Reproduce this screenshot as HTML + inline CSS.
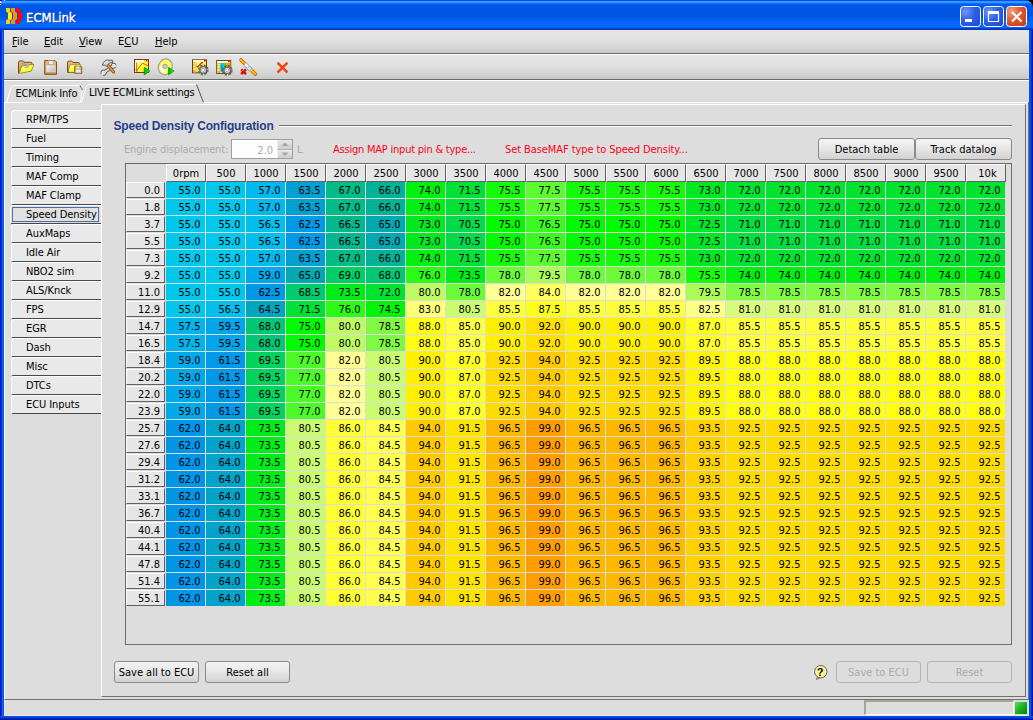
<!DOCTYPE html>
<html lang="en">
<head>
<meta charset="utf-8">
<title>ECMLink</title>
<style>
*{box-sizing:border-box;margin:0;padding:0}
html,body{width:1033px;height:720px;overflow:hidden;background:#0831d9}
body{font-family:"DejaVu Sans Condensed","Liberation Sans",sans-serif;font-size:11px;color:#000;position:relative;line-height:1}
.abs,#win div,#win span.a{position:absolute}
#win{position:absolute;left:0;top:0;width:1033px;height:720px;background:#0551e0;overflow:hidden}
/* title bar */
#title{left:0;top:0;width:1033px;height:30px;border-radius:7px 8px 0 0;background:linear-gradient(180deg,#0050e6 0px,#0050e6 1px,#3c96ff 1.500px,#3a94ff 2.500px,#0470ff 3.500px,#0260f4 4.500px,#0056e4 6px,#0055e2 16px,#015ef0 20px,#0268ff 22px,#0268ff 26px,#0260f2 27.500px,#0048dc 28.500px,#0034c8 29.500px,#0030c4 30px)}
#title .txt{left:26px;top:9.5px;color:#fff;font-family:"DejaVu Sans Condensed","DejaVu Sans","Liberation Sans",sans-serif;font-weight:normal;font-size:13px;line-height:15px;text-shadow:1px 1px 0 #0a2a80;-webkit-text-stroke:0.35px #fff;white-space:nowrap}
.wb{top:6px;width:21px;height:21px;border:1px solid #fff;border-radius:3.5px;background:radial-gradient(circle at 25% 25%,#6c98fa 0%,#2e60e6 45%,#1c48cc 100%)}
.wb.close{background:radial-gradient(circle at 25% 25%,#f0a484 0%,#e0562c 45%,#c23a12 100%)}
/* client */
#client{left:4px;top:30px;width:1025px;height:686px;background:#dddddd}
#menubar{left:4px;top:30px;width:1025px;height:24px;background:linear-gradient(180deg,#e5e5e5 0%,#e2e2e2 40%,#d7d7d7 70%,#c9c9c9 100%);border-top:1px solid #ece9dc;border-bottom:1px solid #6a6a6a}
#menubar span{position:absolute;top:5px;white-space:nowrap}
#menubar u{text-decoration:underline;text-underline-offset:1px}
#toolbar{left:4px;top:54px;width:1025px;height:26px;background:linear-gradient(180deg,#e5e5e5 0%,#e2e2e2 40%,#d7d7d7 70%,#c9c9c9 100%);border-top:1px solid #fff;border-bottom:1px solid #6a6a6a;box-shadow:0 1px 0 #fff}
/* tabs */
.tab{white-space:nowrap;letter-spacing:-0.17px}
/* side tabs */
.st{left:11px;width:90px;height:19px;background:#e9e9e9;border-top:1px solid #fff;border-left:1px solid #fff;border-bottom:1px solid #484848;border-radius:4px 0 0 2px}
.st span{position:absolute;left:14px;top:3px;white-space:nowrap;letter-spacing:-0.08px}
.st.sel{left:10px;width:92px;background:#dddddd}
.st.sel span{left:1px;top:1px;width:87px;height:15px;padding:1px 0 0 13px;border:1px solid #4a6eb0;background:#e1e1e1}
/* main panel */
#panel{left:101px;top:104px;width:925px;height:593px;background:#dddddd;border-top:1px solid #fff;border-left:1px solid #fff;border-right:1px solid #707070;border-bottom:1px solid #707070}
.btn{height:22px;border:1px solid #8a8a8a;border-radius:3px;background:linear-gradient(180deg,#f4f4f4 0%,#e6e6e6 50%,#d2d2d2 100%);text-align:center;line-height:20px;padding-top:1px;white-space:nowrap}
.btn.dis{color:#ababab;background:#dddddd;border-color:#b4b4b4}
/* table */
#tbl{left:125px;top:163px;width:887px;height:482px;border-top:1px solid #686868;border-left:1px solid #686868;border-right:1px solid #707070;border-bottom:1px solid #707070;background:#dddddd}
#tbl .ch:nth-of-type(21){padding-left:3px}
#tbl .ch{top:0;width:40px;height:18px;background:#e6e6e6;border-top:1px solid #fff;border-left:1px solid #fff;border-right:1px solid #606060;border-bottom:1px solid #606060;text-align:center;line-height:16px;padding-top:1px}
#tbl .rh{left:0;width:39px;height:16px;background:#e6e6e6;border-top:1px solid #fff;border-left:1px solid #fff;border-right:1px solid #606060;border-bottom:1px solid #606060;text-align:right;padding-right:4px;line-height:14px;padding-top:1px}
#tbl .row{left:40px;width:840px;height:17px;white-space:nowrap;font-size:0}
#tbl .row i{display:inline-block;width:40px;height:17px;font-style:normal;font-size:11px;line-height:16px;padding-top:1px;vertical-align:top;text-align:right;padding-right:4.5px;border-right:1px solid #dcdcdc;border-bottom:1px solid #dcdcdc}
.hd{font-family:"Liberation Sans",sans-serif;font-weight:bold;font-size:12px;color:#26408a;white-space:nowrap;letter-spacing:-0.17px}
.rule{height:2px;border-top:1px solid #707070;border-bottom:1px solid #fff}
.lbl{white-space:nowrap}
.lbl.dis{letter-spacing:-0.15px}
.dis{color:#ababab}
.red{color:#ff0018}
.spin{width:62px;height:20px;border:1px solid #a0a0a0;background:#fdfdfd;color:#ababab}
#bl{left:0;top:0;width:4px;height:720px;background:linear-gradient(90deg,#0014c8 0,#0014c8 1px,#0030d8 1px,#0030d8 2px,#1266ec 2px,#1266ec 3px,#0655e0 3px)}
#br{left:1029px;top:0;width:4px;height:720px;background:linear-gradient(90deg,#0655e0 0,#0655e0 1px,#0a50e6 1px,#0a50e6 2px,#0030d0 2px,#0030d0 3px,#0014b8 3px)}
#bb{left:0;top:716px;width:1033px;height:4px;background:linear-gradient(180deg,#0650e2 0,#0650e2 1px,#0444d8 1px,#0444d8 2px,#002cc4 2px,#002cc4 3px,#0016a8 3px)}
.px{background:#fff;z-index:5}
#corner{left:1023px;top:0;width:10px;height:10px;background:#000}
#tabpane{left:4px;top:102px;width:1025px;height:598px;border-left:1px solid #fff;border-right:1px solid #707070;border-bottom:1px solid #707070}
#status{left:4px;top:700px;width:1025px;height:16px;background:#dddddd;border-left:1px solid #f0e8d8;border-bottom:1px solid #f0e8d8}
#prog{left:859px;top:0;width:150px;height:15px;border-top:2px solid #a8a498;border-left:2px solid #a8a498;border-bottom:1px solid #fff;border-right:1px solid #fff;background:#dddddd}
#led{left:1010px;top:2px;width:12px;height:12px;background:linear-gradient(135deg,#60e060 0%,#20b020 50%,#008000 100%)}
.sb{left:45px;width:15px;height:9px;border-left:1px solid #f0f0f0;background:linear-gradient(180deg,#e9e9e9,#cdcdcd)}
.tab{white-space:nowrap;letter-spacing:-0.17px}
.v550{background-color:rgb(0,200,236)}
.v565{background-color:rgb(0,190,238)}
.v570{background-color:rgb(0,185,237)}
.v575{background-color:rgb(0,180,236)}
.v590{background-color:rgb(0,169,234)}
.v595{background-color:rgb(0,165,234)}
.v615{background-color:rgb(0,153,232)}
.v620{background-color:rgb(0,150,232)}
.v625{background-color:rgb(0,153,229)}
.v635{background-color:rgb(0,161,210)}
.v640{background-color:rgb(0,163,201)}
.v645{background-color:rgb(0,165,192)}
.v650{background-color:rgb(0,169,178)}
.v660{background-color:rgb(0,178,150)}
.v665{background-color:rgb(0,183,142)}
.v670{background-color:rgb(0,188,134)}
.v680{background-color:rgb(0,198,118)}
.v685{background-color:rgb(0,202,110)}
.v690{background-color:rgb(0,206,102)}
.v695{background-color:rgb(0,211,93)}
.v705{background-color:rgb(0,218,75)}
.v710{background-color:rgb(0,222,65)}
.v715{background-color:rgb(0,225,55)}
.v720{background-color:rgb(0,228,48)}
.v725{background-color:rgb(0,230,40)}
.v730{background-color:rgb(0,233,32)}
.v735{background-color:rgb(0,236,25)}
.v740{background-color:rgb(0,241,17)}
.v745{background-color:rgb(0,245,8)}
.v750{background-color:rgb(0,250,0)}
.v755{background-color:rgb(21,251,11)}
.v760{background-color:rgb(42,252,22)}
.v765{background-color:rgb(58,251,31)}
.v770{background-color:rgb(75,250,40)}
.v775{background-color:rgb(92,250,49)}
.v780{background-color:rgb(108,249,58)}
.v785{background-color:rgb(128,249,68)}
.v795{background-color:rgb(170,250,90)}
.v800{background-color:rgb(190,250,100)}
.v805{background-color:rgb(202,251,112)}
.v810{background-color:rgb(215,252,125)}
.v820{background-color:rgb(255,255,150)}
.v825{background-color:rgb(255,255,135)}
.v830{background-color:rgb(255,255,120)}
.v840{background-color:rgb(255,255,95)}
.v845{background-color:rgb(255,255,82)}
.v850{background-color:rgb(255,255,70)}
.v855{background-color:rgb(255,255,62)}
.v860{background-color:rgb(255,255,53)}
.v870{background-color:rgb(255,255,37)}
.v875{background-color:rgb(255,255,28)}
.v880{background-color:rgb(255,255,20)}
.v895{background-color:rgb(255,244,5)}
.v900{background-color:rgb(255,240,0)}
.v915{background-color:rgb(255,228,0)}
.v920{background-color:rgb(255,224,0)}
.v925{background-color:rgb(255,220,0)}
.v935{background-color:rgb(255,209,0)}
.v940{background-color:rgb(255,203,0)}
.v965{background-color:rgb(255,184,0)}
.v990{background-color:rgb(255,158,0)}
</style>
</head>
<body>
<div id="win">
 <div id="bl"></div><div id="br"></div><div id="bb"></div>
 <div id="corner"></div>
 <div class="px" style="left:4px;top:0;width:1px;height:1px"></div><div class="px" style="left:0;top:1px;width:2px;height:2px;border-radius:0 2px 0 0"></div><div class="px" style="left:0;top:4px;width:1px;height:1px"></div>
 <div id="title">
  <svg style="position:absolute;left:6px;top:8px" width="17" height="16" viewBox="0 0 17 16">
   <path d="M0 0h4v3.500l2 1.500v6l-2 1.500v3.500h-4v-3.500l2-1.500v-6l-2-1.500z" fill="#ffd000"/>
   <path d="M2.200 5h3v6h-3z" fill="#fff000"/>
   <path d="M5 0h4v3.500l2 1.500v6l-2 1.500v3.500h-4v-3.500l2-1.500v-6l-2-1.500z" fill="#ff8c10"/>
   <path d="M10 0h4v3.500l2 1.500v6l-2 1.500v3.500h-4v-3.500l2-1.500v-6l-2-1.500z" fill="#f40a0a"/>
  </svg>
  <div class="txt">ECMLink</div>
  <div class="wb" style="left:960px"><svg width="19" height="19"><rect x="4" y="12" width="7" height="3" fill="#fff"/></svg></div>
  <div class="wb" style="left:983px"><svg width="19" height="19"><path d="M4.500 5.500h10v9h-10z" fill="none" stroke="#fff" stroke-width="1.200"/><rect x="4" y="4" width="11" height="3" fill="#fff"/></svg></div>
  <div class="wb close" style="left:1006px"><svg width="19" height="19"><path d="M5 5l9.500 9.500M14.500 5l-9.500 9.500" stroke="#fff" stroke-width="2.200" stroke-linecap="butt"/></svg></div>
 </div>
 <div id="client"></div>
 <div id="menubar">
  <span style="left:8px"><u>F</u>ile</span>
  <span style="left:40px"><u>E</u>dit</span>
  <span style="left:75px"><u>V</u>iew</span>
  <span style="left:114px">E<u>C</u>U</span>
  <span style="left:151px"><u>H</u>elp</span>
 </div>
 <div id="toolbar">
  <svg style="position:absolute;left:-4px;top:-1px" width="304" height="26" viewBox="0 54 304 26">
   <defs>
    <linearGradient id="gy" x1="0" y1="0" x2="1" y2="1"><stop offset="0" stop-color="#ffffc0"/><stop offset="0.500" stop-color="#ffff40"/><stop offset="1" stop-color="#e4e400"/></linearGradient>
    <linearGradient id="gt" x1="0" y1="0" x2="0" y2="1"><stop offset="0" stop-color="#e8c088"/><stop offset="1" stop-color="#c89040"/></linearGradient>
    <linearGradient id="gg" x1="0" y1="0" x2="1" y2="0"><stop offset="0" stop-color="#00a800"/><stop offset="0.600" stop-color="#10e010"/><stop offset="1" stop-color="#40f040"/></linearGradient>
    <linearGradient id="gs" x1="0" y1="0" x2="1" y2="1"><stop offset="0" stop-color="#f4f4f4"/><stop offset="1" stop-color="#b8b8b8"/></linearGradient>
   </defs>
   <!-- 1 open folder -->
   <g>
    <path d="M18.500 73.500V62.300Q18.500 61 20 61H23Q24 61 24.300 62.300H31Q32 62.300 32 63.500V66" fill="url(#gt)" stroke="#7a4a10" stroke-width="1"/>
    <path d="M21.700 66L34 64.300L31.200 71.200L19.300 73.400z" fill="url(#gy)" stroke="#80701a" stroke-width="0.700"/>
    <path d="M21 64Q24 62.500 26.300 65.500" fill="none" stroke="#a0a0a8" stroke-width="1.500"/>
    <path d="M24.800 67.300L28.300 67.800L27.600 63.800z" fill="#c8c8d0" stroke="#909098" stroke-width="0.500"/>
   </g>
   <!-- 2 floppy -->
   <g>
    <path d="M44.700 60.500H55L56.500 62V74.300H44.700z" fill="url(#gt)" stroke="#80500c" stroke-width="1"/>
    <rect x="48.300" y="60.600" width="5.500" height="4" fill="#e4e4e4" stroke="#b09060" stroke-width="0.500"/>
    <rect x="50.500" y="61" width="1.500" height="3" fill="#f8f8f8"/>
    <rect x="46.200" y="65.700" width="9" height="6.200" fill="url(#gs)" stroke="#d8e0f0" stroke-width="0.600"/>
   </g>
   <!-- 3 folder + floppy -->
   <g>
    <path d="M67.500 72.500V62.300Q67.500 61.200 69 61.200H71.500Q72.500 61.200 72.800 62.500H78.500Q79.500 62.500 79.500 63.700V72.500z" fill="url(#gt)" stroke="#7a4a10" stroke-width="1"/>
    <path d="M69.800 64.800L80.500 64.300L79 72.300L68.200 72.300z" fill="url(#gy)" stroke="#80701a" stroke-width="0.600"/>
    <path d="M74.700 66.200H81L81.800 67V73.300H74.700z" fill="#d8a868" stroke="#80500c" stroke-width="0.800"/>
    <rect x="76.300" y="66.400" width="3.200" height="2.300" fill="#dce4f4"/>
    <rect x="75.800" y="69.800" width="4.800" height="2.800" fill="#e8e8e8"/>
   </g>
   <!-- 4 tools -->
   <g>
    <path d="M104 72.500L113.300 66" stroke="#505050" stroke-width="3.800" stroke-linecap="butt"/>
    <circle cx="103.600" cy="72.700" r="2.700" fill="#e8e8e8" stroke="#505050" stroke-width="1"/>
    <circle cx="113.700" cy="65.700" r="2.500" fill="#e8e8e8" stroke="#505050" stroke-width="1"/>
    <path d="M104 72.500L113.300 66" stroke="#e4e4e4" stroke-width="2" stroke-linecap="butt"/>
    <path d="M100.500 74L103.800 72.800L102.600 76.500z" fill="#dbdbdb"/>
    <path d="M116.800 64L113.600 65.700L116.300 67.800z" fill="#dbdbdb"/>
    <path d="M107.500 64.800L113.600 72" stroke="#7a4a08" stroke-width="3" stroke-linecap="round"/>
    <path d="M107.500 64.800L113.600 72" stroke="#f0a030" stroke-width="1.500" stroke-linecap="round"/>
    <path d="M102.300 65.300Q102.800 62 106.200 60.200L112.500 60.200L113 62.300L109 63.200L106.500 66.300Q104.500 64.500 102.300 65.300z" fill="#d4d4d4" stroke="#505050" stroke-width="0.900"/>
    <path d="M104 63.500Q105.500 61.500 108 61.200" stroke="#fafafa" stroke-width="0.800" fill="none"/>
   </g>
   <!-- 5 graph + play -->
   <g>
    <rect x="134.500" y="59.500" width="14" height="13" fill="url(#gy)" stroke="#7a3c00" stroke-width="1"/>
    <rect x="135" y="60" width="13" height="1.700" fill="#fff"/>
    <rect x="144" y="60" width="1.300" height="1.500" fill="#ffa000"/><rect x="146" y="60" width="1.500" height="1.500" fill="#f01010"/>
    <rect x="135" y="62" width="1.200" height="10" fill="#fff"/>
    <path d="M136.700 62.500V72M135 69.800H138" stroke="#b86010" stroke-width="0.900" fill="none"/>
    <path d="M136.700 70.500L142.500 63.200L148 65.700" stroke="#c86a10" stroke-width="1" fill="none"/>
    <path d="M144.200 67.200V75L150 71z" fill="url(#gg)" stroke="#008800" stroke-width="0.600"/>
   </g>
   <!-- 6 cd + play -->
   <g>
    <ellipse cx="165.300" cy="66.800" rx="6.800" ry="8" transform="rotate(20 165.300 66.800)" fill="#ffff58" stroke="#a0a0a8" stroke-width="1.300"/>
    <ellipse cx="163.600" cy="68" rx="3.200" ry="5" transform="rotate(20 163.600 68)" fill="#fffff0" opacity="0.750"/>
    <circle cx="165" cy="66.300" r="2.200" fill="#d0d0d8" stroke="#8c8c98" stroke-width="0.900"/>
    <path d="M168.400 67.200V75L174.200 71z" fill="url(#gg)" stroke="#008800" stroke-width="0.600"/>
   </g>
   <!-- 7 graph + gear -->
   <g>
    <rect x="192.500" y="59.800" width="14" height="13" fill="url(#gy)" stroke="#7a3c00" stroke-width="1"/>
    <rect x="193" y="60.300" width="13" height="1.600" fill="#fff"/>
    <rect x="202.300" y="60.200" width="1.300" height="1.400" fill="#fff"/><rect x="204" y="60" width="1.800" height="1.600" fill="#f01010"/>
    <rect x="193" y="62.200" width="3.400" height="10.200" fill="#d8b070"/>
    <rect x="193.400" y="63" width="2.200" height="1.600" fill="#ffff60"/><rect x="193.400" y="65.600" width="2.200" height="1.600" fill="#ffff60"/><rect x="193.400" y="68.200" width="2.200" height="2" fill="#ffff60"/>
    <path d="M196.500 66.600H198L201.800 62.600H203" stroke="#f01010" stroke-width="1.100" fill="none"/>
    <circle cx="203.200" cy="69.900" r="4.200" fill="none" stroke="#686868" stroke-width="2.600" stroke-dasharray="2 1.300"/>
    <circle cx="203.200" cy="69.900" r="3.200" fill="#e4e4e4" stroke="#686868" stroke-width="1.200"/>
    <circle cx="203.200" cy="69.900" r="1.500" fill="#fff" stroke="#808080" stroke-width="0.600"/>
   </g>
   <!-- 8 map + gear -->
   <g>
    <rect x="216.700" y="60.500" width="14" height="13" fill="url(#gy)" stroke="#7a3c00" stroke-width="1"/>
    <rect x="217.200" y="61" width="13" height="1.600" fill="#fff"/>
    <rect x="226.300" y="60.900" width="1.300" height="1.400" fill="#fff"/><rect x="228" y="60.700" width="1.800" height="1.600" fill="#f01010"/>
    <rect x="217.200" y="62.900" width="3" height="10.200" fill="#d8b070"/>
    <rect x="217.600" y="63.700" width="2" height="1.600" fill="#ffff60"/><rect x="217.600" y="66.300" width="2" height="1.600" fill="#ffff60"/><rect x="217.600" y="68.900" width="2" height="2" fill="#ffff60"/>
    <path d="M220.300 63V71.500H224V63z" fill="#00c8f0"/>
    <path d="M221.500 63L223.300 71.500H221.200z" fill="#0080f0"/>
    <path d="M223.300 63H226V69H224z" fill="#30e030"/>
    <path d="M226 63H230.400V67H226z" fill="#ffa000"/>
    <circle cx="227.200" cy="70.300" r="4.200" fill="none" stroke="#686868" stroke-width="2.600" stroke-dasharray="2 1.300"/>
    <circle cx="227.200" cy="70.300" r="3.200" fill="#e4e4e4" stroke="#686868" stroke-width="1.200"/>
    <circle cx="227.200" cy="70.300" r="1.500" fill="#fff" stroke="#808080" stroke-width="0.600"/>
   </g>
   <!-- 9 disconnect -->
   <g>
    <path d="M241 60L244.500 63.500" stroke="#c86000" stroke-width="3.600" stroke-linecap="round"/>
    <path d="M241 60L244.500 63.500" stroke="#ffa000" stroke-width="2.400" stroke-linecap="round"/>
    <path d="M240.600 59.800L243 62.200" stroke="#ffe800" stroke-width="1" stroke-linecap="round"/>
    <path d="M251.800 70.500L255.300 74" stroke="#c86000" stroke-width="3.600" stroke-linecap="round"/>
    <path d="M251.800 70.500L255.300 74" stroke="#ffa000" stroke-width="2.400" stroke-linecap="round"/>
    <path d="M252.600 71.300L255 73.700" stroke="#ffe800" stroke-width="1" stroke-linecap="round"/>
    <path d="M245 64L248 67" stroke="#8090a0" stroke-width="4" />
    <path d="M245 64L248 67" stroke="#f4f8fc" stroke-width="2.600" />
    <path d="M248.500 67.500L251.800 70.800" stroke="#707070" stroke-width="4.400" stroke-dasharray="1 0.800"/>
    <path d="M248.500 67.500L251.800 70.800" stroke="#f8f8f8" stroke-width="2.800" stroke-dasharray="1 0.800"/>
    <path d="M241.200 69.300L246 74.200M246 69.300L241.200 74.200" stroke="#e80000" stroke-width="2.400"/>
    <path d="M242 69.800L243.600 71.400" stroke="#ffd000" stroke-width="0.900"/>
   </g>
   <!-- 10 red X -->
   <g>
    <path d="M277.600 62.800L287.400 72.500M287.400 62.800L277.600 72.500" stroke="#b83000" stroke-width="2.600" opacity="0.600"/>
    <path d="M277.600 62.600L287.400 72.300M287.400 62.600L277.600 72.300" stroke="#ff3c00" stroke-width="1.800"/>
   </g>
  </svg>

 </div>
 <div id="tabpane"></div>
 <svg id="tabs" style="position:absolute;left:0;top:80px" width="1033" height="26" viewBox="0 80 1033 26">
  <path d="M82 86L80.500 102.500H4.500" fill="none" stroke="#fff" stroke-width="1"/>
  <path d="M6.500 102.500L11 88Q11.800 85.500 14.500 85.500H80" fill="none" stroke="#fff" stroke-width="1"/>
  <path d="M80 85.500L82.500 90" fill="none" stroke="#606060" stroke-width="1"/>
  <path d="M81.500 102.500L86 87Q86.800 84.500 89.500 84.500H196.500" fill="#dddddd" stroke="#fff" stroke-width="1"/>
  <path d="M196.500 84.500L203.500 102.500" fill="none" stroke="#505050" stroke-width="1"/>
  <path d="M203.500 102.500H1028" fill="none" stroke="#fff" stroke-width="1"/>
 </svg>
 <div class="tab" style="left:15.500px;top:88px">ECMLink Info</div>
 <div class="tab" style="left:89px;top:87px">LIVE ECMLink settings</div>
<div class="st" style="top:110px"><span>RPM/TPS</span></div>
<div class="st" style="top:129px"><span>Fuel</span></div>
<div class="st" style="top:148px"><span>Timing</span></div>
<div class="st" style="top:167px"><span>MAF Comp</span></div>
<div class="st" style="top:186px"><span>MAF Clamp</span></div>
<div class="st sel" style="top:205px"><span>Speed Density</span></div>
<div class="st" style="top:224px"><span>AuxMaps</span></div>
<div class="st" style="top:243px"><span>Idle Air</span></div>
<div class="st" style="top:262px"><span>NBO2 sim</span></div>
<div class="st" style="top:281px"><span>ALS/Knck</span></div>
<div class="st" style="top:300px"><span>FPS</span></div>
<div class="st" style="top:319px"><span>EGR</span></div>
<div class="st" style="top:338px"><span>Dash</span></div>
<div class="st" style="top:357px"><span>Misc</span></div>
<div class="st" style="top:376px"><span>DTCs</span></div>
<div class="st" style="top:395px"><span>ECU Inputs</span></div>

 <div id="panel"></div>
 <div class="hd" style="left:113.5px;top:120px">Speed Density Configuration</div>
 <div class="rule" style="left:279px;top:125px;width:733px"></div>
 <div class="lbl dis" style="left:124px;top:144px">Engine displacement:</div>
 <div class="spin" style="left:231px;top:139px"><span class="a" style="right:19px;top:5px">2.0</span>
  <div class="sb" style="top:0"><svg width="14" height="9"><path d="M3.500 6L7 2.500L10.500 6z" fill="#a4a4a4"/></svg></div>
  <div class="sb" style="top:9px;border-top:1px solid #b4b4b4"><svg width="14" height="9"><path d="M3.500 2.500L7 6L10.500 2.500z" fill="#a4a4a4"/></svg></div>
 </div>
 <div class="lbl dis" style="left:297px;top:144px">L</div>
 <div class="lbl red" style="left:333px;top:144px;letter-spacing:-0.22px">Assign MAP input pin &amp; type...</div>
 <div class="lbl red" style="left:505px;top:144px;letter-spacing:-0.08px">Set BaseMAF type to Speed Density...</div>
 <div class="btn" style="left:818px;top:138px;width:97px">Detach table</div>
 <div class="btn" style="left:915px;top:138px;width:97px">Track datalog</div>
 <div id="tbl">
<div class="ch" style="left:40px">0rpm</div>
<div class="ch" style="left:80px">500</div>
<div class="ch" style="left:120px">1000</div>
<div class="ch" style="left:160px">1500</div>
<div class="ch" style="left:200px">2000</div>
<div class="ch" style="left:240px">2500</div>
<div class="ch" style="left:280px">3000</div>
<div class="ch" style="left:320px">3500</div>
<div class="ch" style="left:360px">4000</div>
<div class="ch" style="left:400px">4500</div>
<div class="ch" style="left:440px">5000</div>
<div class="ch" style="left:480px">5500</div>
<div class="ch" style="left:520px">6000</div>
<div class="ch" style="left:560px">6500</div>
<div class="ch" style="left:600px">7000</div>
<div class="ch" style="left:640px">7500</div>
<div class="ch" style="left:680px">8000</div>
<div class="ch" style="left:720px">8500</div>
<div class="ch" style="left:760px">9000</div>
<div class="ch" style="left:800px">9500</div>
<div class="ch" style="left:840px">10k</div>
<div class="rh" style="top:18px">0.0</div>
<div class="row" style="top:18px"><i class="v550">55.0</i><i class="v550">55.0</i><i class="v570">57.0</i><i class="v635">63.5</i><i class="v670">67.0</i><i class="v660">66.0</i><i class="v740">74.0</i><i class="v715">71.5</i><i class="v755">75.5</i><i class="v775">77.5</i><i class="v755">75.5</i><i class="v755">75.5</i><i class="v755">75.5</i><i class="v730">73.0</i><i class="v720">72.0</i><i class="v720">72.0</i><i class="v720">72.0</i><i class="v720">72.0</i><i class="v720">72.0</i><i class="v720">72.0</i><i class="v720">72.0</i></div>
<div class="rh" style="top:35px">1.8</div>
<div class="row" style="top:35px"><i class="v550">55.0</i><i class="v550">55.0</i><i class="v570">57.0</i><i class="v635">63.5</i><i class="v670">67.0</i><i class="v660">66.0</i><i class="v740">74.0</i><i class="v715">71.5</i><i class="v755">75.5</i><i class="v775">77.5</i><i class="v755">75.5</i><i class="v755">75.5</i><i class="v755">75.5</i><i class="v730">73.0</i><i class="v720">72.0</i><i class="v720">72.0</i><i class="v720">72.0</i><i class="v720">72.0</i><i class="v720">72.0</i><i class="v720">72.0</i><i class="v720">72.0</i></div>
<div class="rh" style="top:52px">3.7</div>
<div class="row" style="top:52px"><i class="v550">55.0</i><i class="v550">55.0</i><i class="v565">56.5</i><i class="v625">62.5</i><i class="v665">66.5</i><i class="v650">65.0</i><i class="v730">73.0</i><i class="v705">70.5</i><i class="v750">75.0</i><i class="v765">76.5</i><i class="v750">75.0</i><i class="v750">75.0</i><i class="v750">75.0</i><i class="v725">72.5</i><i class="v710">71.0</i><i class="v710">71.0</i><i class="v710">71.0</i><i class="v710">71.0</i><i class="v710">71.0</i><i class="v710">71.0</i><i class="v710">71.0</i></div>
<div class="rh" style="top:69px">5.5</div>
<div class="row" style="top:69px"><i class="v550">55.0</i><i class="v550">55.0</i><i class="v565">56.5</i><i class="v625">62.5</i><i class="v665">66.5</i><i class="v650">65.0</i><i class="v730">73.0</i><i class="v705">70.5</i><i class="v750">75.0</i><i class="v765">76.5</i><i class="v750">75.0</i><i class="v750">75.0</i><i class="v750">75.0</i><i class="v725">72.5</i><i class="v710">71.0</i><i class="v710">71.0</i><i class="v710">71.0</i><i class="v710">71.0</i><i class="v710">71.0</i><i class="v710">71.0</i><i class="v710">71.0</i></div>
<div class="rh" style="top:86px">7.3</div>
<div class="row" style="top:86px"><i class="v550">55.0</i><i class="v550">55.0</i><i class="v570">57.0</i><i class="v635">63.5</i><i class="v670">67.0</i><i class="v660">66.0</i><i class="v740">74.0</i><i class="v715">71.5</i><i class="v755">75.5</i><i class="v775">77.5</i><i class="v755">75.5</i><i class="v755">75.5</i><i class="v755">75.5</i><i class="v730">73.0</i><i class="v720">72.0</i><i class="v720">72.0</i><i class="v720">72.0</i><i class="v720">72.0</i><i class="v720">72.0</i><i class="v720">72.0</i><i class="v720">72.0</i></div>
<div class="rh" style="top:103px">9.2</div>
<div class="row" style="top:103px"><i class="v550">55.0</i><i class="v550">55.0</i><i class="v590">59.0</i><i class="v650">65.0</i><i class="v690">69.0</i><i class="v680">68.0</i><i class="v760">76.0</i><i class="v735">73.5</i><i class="v780">78.0</i><i class="v795">79.5</i><i class="v780">78.0</i><i class="v780">78.0</i><i class="v780">78.0</i><i class="v755">75.5</i><i class="v740">74.0</i><i class="v740">74.0</i><i class="v740">74.0</i><i class="v740">74.0</i><i class="v740">74.0</i><i class="v740">74.0</i><i class="v740">74.0</i></div>
<div class="rh" style="top:120px">11.0</div>
<div class="row" style="top:120px"><i class="v550">55.0</i><i class="v550">55.0</i><i class="v625">62.5</i><i class="v685">68.5</i><i class="v735">73.5</i><i class="v720">72.0</i><i class="v800">80.0</i><i class="v780">78.0</i><i class="v820">82.0</i><i class="v840">84.0</i><i class="v820">82.0</i><i class="v820">82.0</i><i class="v820">82.0</i><i class="v795">79.5</i><i class="v785">78.5</i><i class="v785">78.5</i><i class="v785">78.5</i><i class="v785">78.5</i><i class="v785">78.5</i><i class="v785">78.5</i><i class="v785">78.5</i></div>
<div class="rh" style="top:137px">12.9</div>
<div class="row" style="top:137px"><i class="v550">55.0</i><i class="v565">56.5</i><i class="v645">64.5</i><i class="v715">71.5</i><i class="v760">76.0</i><i class="v745">74.5</i><i class="v830">83.0</i><i class="v805">80.5</i><i class="v855">85.5</i><i class="v875">87.5</i><i class="v855">85.5</i><i class="v855">85.5</i><i class="v855">85.5</i><i class="v825">82.5</i><i class="v810">81.0</i><i class="v810">81.0</i><i class="v810">81.0</i><i class="v810">81.0</i><i class="v810">81.0</i><i class="v810">81.0</i><i class="v810">81.0</i></div>
<div class="rh" style="top:154px">14.7</div>
<div class="row" style="top:154px"><i class="v575">57.5</i><i class="v595">59.5</i><i class="v680">68.0</i><i class="v750">75.0</i><i class="v800">80.0</i><i class="v785">78.5</i><i class="v880">88.0</i><i class="v850">85.0</i><i class="v900">90.0</i><i class="v920">92.0</i><i class="v900">90.0</i><i class="v900">90.0</i><i class="v900">90.0</i><i class="v870">87.0</i><i class="v855">85.5</i><i class="v855">85.5</i><i class="v855">85.5</i><i class="v855">85.5</i><i class="v855">85.5</i><i class="v855">85.5</i><i class="v855">85.5</i></div>
<div class="rh" style="top:171px">16.5</div>
<div class="row" style="top:171px"><i class="v575">57.5</i><i class="v595">59.5</i><i class="v680">68.0</i><i class="v750">75.0</i><i class="v800">80.0</i><i class="v785">78.5</i><i class="v880">88.0</i><i class="v850">85.0</i><i class="v900">90.0</i><i class="v920">92.0</i><i class="v900">90.0</i><i class="v900">90.0</i><i class="v900">90.0</i><i class="v870">87.0</i><i class="v855">85.5</i><i class="v855">85.5</i><i class="v855">85.5</i><i class="v855">85.5</i><i class="v855">85.5</i><i class="v855">85.5</i><i class="v855">85.5</i></div>
<div class="rh" style="top:188px">18.4</div>
<div class="row" style="top:188px"><i class="v590">59.0</i><i class="v615">61.5</i><i class="v695">69.5</i><i class="v770">77.0</i><i class="v820">82.0</i><i class="v805">80.5</i><i class="v900">90.0</i><i class="v870">87.0</i><i class="v925">92.5</i><i class="v940">94.0</i><i class="v925">92.5</i><i class="v925">92.5</i><i class="v925">92.5</i><i class="v895">89.5</i><i class="v880">88.0</i><i class="v880">88.0</i><i class="v880">88.0</i><i class="v880">88.0</i><i class="v880">88.0</i><i class="v880">88.0</i><i class="v880">88.0</i></div>
<div class="rh" style="top:205px">20.2</div>
<div class="row" style="top:205px"><i class="v590">59.0</i><i class="v615">61.5</i><i class="v695">69.5</i><i class="v770">77.0</i><i class="v820">82.0</i><i class="v805">80.5</i><i class="v900">90.0</i><i class="v870">87.0</i><i class="v925">92.5</i><i class="v940">94.0</i><i class="v925">92.5</i><i class="v925">92.5</i><i class="v925">92.5</i><i class="v895">89.5</i><i class="v880">88.0</i><i class="v880">88.0</i><i class="v880">88.0</i><i class="v880">88.0</i><i class="v880">88.0</i><i class="v880">88.0</i><i class="v880">88.0</i></div>
<div class="rh" style="top:222px">22.0</div>
<div class="row" style="top:222px"><i class="v590">59.0</i><i class="v615">61.5</i><i class="v695">69.5</i><i class="v770">77.0</i><i class="v820">82.0</i><i class="v805">80.5</i><i class="v900">90.0</i><i class="v870">87.0</i><i class="v925">92.5</i><i class="v940">94.0</i><i class="v925">92.5</i><i class="v925">92.5</i><i class="v925">92.5</i><i class="v895">89.5</i><i class="v880">88.0</i><i class="v880">88.0</i><i class="v880">88.0</i><i class="v880">88.0</i><i class="v880">88.0</i><i class="v880">88.0</i><i class="v880">88.0</i></div>
<div class="rh" style="top:239px">23.9</div>
<div class="row" style="top:239px"><i class="v590">59.0</i><i class="v615">61.5</i><i class="v695">69.5</i><i class="v770">77.0</i><i class="v820">82.0</i><i class="v805">80.5</i><i class="v900">90.0</i><i class="v870">87.0</i><i class="v925">92.5</i><i class="v940">94.0</i><i class="v925">92.5</i><i class="v925">92.5</i><i class="v925">92.5</i><i class="v895">89.5</i><i class="v880">88.0</i><i class="v880">88.0</i><i class="v880">88.0</i><i class="v880">88.0</i><i class="v880">88.0</i><i class="v880">88.0</i><i class="v880">88.0</i></div>
<div class="rh" style="top:256px">25.7</div>
<div class="row" style="top:256px"><i class="v620">62.0</i><i class="v640">64.0</i><i class="v735">73.5</i><i class="v805">80.5</i><i class="v860">86.0</i><i class="v845">84.5</i><i class="v940">94.0</i><i class="v915">91.5</i><i class="v965">96.5</i><i class="v990">99.0</i><i class="v965">96.5</i><i class="v965">96.5</i><i class="v965">96.5</i><i class="v935">93.5</i><i class="v925">92.5</i><i class="v925">92.5</i><i class="v925">92.5</i><i class="v925">92.5</i><i class="v925">92.5</i><i class="v925">92.5</i><i class="v925">92.5</i></div>
<div class="rh" style="top:273px">27.6</div>
<div class="row" style="top:273px"><i class="v620">62.0</i><i class="v640">64.0</i><i class="v735">73.5</i><i class="v805">80.5</i><i class="v860">86.0</i><i class="v845">84.5</i><i class="v940">94.0</i><i class="v915">91.5</i><i class="v965">96.5</i><i class="v990">99.0</i><i class="v965">96.5</i><i class="v965">96.5</i><i class="v965">96.5</i><i class="v935">93.5</i><i class="v925">92.5</i><i class="v925">92.5</i><i class="v925">92.5</i><i class="v925">92.5</i><i class="v925">92.5</i><i class="v925">92.5</i><i class="v925">92.5</i></div>
<div class="rh" style="top:290px">29.4</div>
<div class="row" style="top:290px"><i class="v620">62.0</i><i class="v640">64.0</i><i class="v735">73.5</i><i class="v805">80.5</i><i class="v860">86.0</i><i class="v845">84.5</i><i class="v940">94.0</i><i class="v915">91.5</i><i class="v965">96.5</i><i class="v990">99.0</i><i class="v965">96.5</i><i class="v965">96.5</i><i class="v965">96.5</i><i class="v935">93.5</i><i class="v925">92.5</i><i class="v925">92.5</i><i class="v925">92.5</i><i class="v925">92.5</i><i class="v925">92.5</i><i class="v925">92.5</i><i class="v925">92.5</i></div>
<div class="rh" style="top:307px">31.2</div>
<div class="row" style="top:307px"><i class="v620">62.0</i><i class="v640">64.0</i><i class="v735">73.5</i><i class="v805">80.5</i><i class="v860">86.0</i><i class="v845">84.5</i><i class="v940">94.0</i><i class="v915">91.5</i><i class="v965">96.5</i><i class="v990">99.0</i><i class="v965">96.5</i><i class="v965">96.5</i><i class="v965">96.5</i><i class="v935">93.5</i><i class="v925">92.5</i><i class="v925">92.5</i><i class="v925">92.5</i><i class="v925">92.5</i><i class="v925">92.5</i><i class="v925">92.5</i><i class="v925">92.5</i></div>
<div class="rh" style="top:324px">33.1</div>
<div class="row" style="top:324px"><i class="v620">62.0</i><i class="v640">64.0</i><i class="v735">73.5</i><i class="v805">80.5</i><i class="v860">86.0</i><i class="v845">84.5</i><i class="v940">94.0</i><i class="v915">91.5</i><i class="v965">96.5</i><i class="v990">99.0</i><i class="v965">96.5</i><i class="v965">96.5</i><i class="v965">96.5</i><i class="v935">93.5</i><i class="v925">92.5</i><i class="v925">92.5</i><i class="v925">92.5</i><i class="v925">92.5</i><i class="v925">92.5</i><i class="v925">92.5</i><i class="v925">92.5</i></div>
<div class="rh" style="top:341px">36.7</div>
<div class="row" style="top:341px"><i class="v620">62.0</i><i class="v640">64.0</i><i class="v735">73.5</i><i class="v805">80.5</i><i class="v860">86.0</i><i class="v845">84.5</i><i class="v940">94.0</i><i class="v915">91.5</i><i class="v965">96.5</i><i class="v990">99.0</i><i class="v965">96.5</i><i class="v965">96.5</i><i class="v965">96.5</i><i class="v935">93.5</i><i class="v925">92.5</i><i class="v925">92.5</i><i class="v925">92.5</i><i class="v925">92.5</i><i class="v925">92.5</i><i class="v925">92.5</i><i class="v925">92.5</i></div>
<div class="rh" style="top:358px">40.4</div>
<div class="row" style="top:358px"><i class="v620">62.0</i><i class="v640">64.0</i><i class="v735">73.5</i><i class="v805">80.5</i><i class="v860">86.0</i><i class="v845">84.5</i><i class="v940">94.0</i><i class="v915">91.5</i><i class="v965">96.5</i><i class="v990">99.0</i><i class="v965">96.5</i><i class="v965">96.5</i><i class="v965">96.5</i><i class="v935">93.5</i><i class="v925">92.5</i><i class="v925">92.5</i><i class="v925">92.5</i><i class="v925">92.5</i><i class="v925">92.5</i><i class="v925">92.5</i><i class="v925">92.5</i></div>
<div class="rh" style="top:375px">44.1</div>
<div class="row" style="top:375px"><i class="v620">62.0</i><i class="v640">64.0</i><i class="v735">73.5</i><i class="v805">80.5</i><i class="v860">86.0</i><i class="v845">84.5</i><i class="v940">94.0</i><i class="v915">91.5</i><i class="v965">96.5</i><i class="v990">99.0</i><i class="v965">96.5</i><i class="v965">96.5</i><i class="v965">96.5</i><i class="v935">93.5</i><i class="v925">92.5</i><i class="v925">92.5</i><i class="v925">92.5</i><i class="v925">92.5</i><i class="v925">92.5</i><i class="v925">92.5</i><i class="v925">92.5</i></div>
<div class="rh" style="top:392px">47.8</div>
<div class="row" style="top:392px"><i class="v620">62.0</i><i class="v640">64.0</i><i class="v735">73.5</i><i class="v805">80.5</i><i class="v860">86.0</i><i class="v845">84.5</i><i class="v940">94.0</i><i class="v915">91.5</i><i class="v965">96.5</i><i class="v990">99.0</i><i class="v965">96.5</i><i class="v965">96.5</i><i class="v965">96.5</i><i class="v935">93.5</i><i class="v925">92.5</i><i class="v925">92.5</i><i class="v925">92.5</i><i class="v925">92.5</i><i class="v925">92.5</i><i class="v925">92.5</i><i class="v925">92.5</i></div>
<div class="rh" style="top:409px">51.4</div>
<div class="row" style="top:409px"><i class="v620">62.0</i><i class="v640">64.0</i><i class="v735">73.5</i><i class="v805">80.5</i><i class="v860">86.0</i><i class="v845">84.5</i><i class="v940">94.0</i><i class="v915">91.5</i><i class="v965">96.5</i><i class="v990">99.0</i><i class="v965">96.5</i><i class="v965">96.5</i><i class="v965">96.5</i><i class="v935">93.5</i><i class="v925">92.5</i><i class="v925">92.5</i><i class="v925">92.5</i><i class="v925">92.5</i><i class="v925">92.5</i><i class="v925">92.5</i><i class="v925">92.5</i></div>
<div class="rh" style="top:426px">55.1</div>
<div class="row" style="top:426px"><i class="v620">62.0</i><i class="v640">64.0</i><i class="v735">73.5</i><i class="v805">80.5</i><i class="v860">86.0</i><i class="v845">84.5</i><i class="v940">94.0</i><i class="v915">91.5</i><i class="v965">96.5</i><i class="v990">99.0</i><i class="v965">96.5</i><i class="v965">96.5</i><i class="v965">96.5</i><i class="v935">93.5</i><i class="v925">92.5</i><i class="v925">92.5</i><i class="v925">92.5</i><i class="v925">92.5</i><i class="v925">92.5</i><i class="v925">92.5</i><i class="v925">92.5</i></div>
 </div>
 <div class="btn" style="left:114px;top:661px;width:85px">Save all to ECU</div>
 <div class="btn" style="left:205px;top:661px;width:85px">Reset all</div>
 <svg style="position:absolute;left:813px;top:664px" width="16" height="17" viewBox="0 0 16 17">
  <path d="M4.500 12.500L3.500 15.500L7.500 13.600z" fill="#f4f290" stroke="#66664a" stroke-width="0.900"/>
  <circle cx="7.800" cy="7.700" r="6.200" fill="#f8f69c" stroke="#66664a" stroke-width="1"/>
  <text x="7.200" y="11.600" text-anchor="middle" font-family="Liberation Sans, sans-serif" font-weight="bold" font-size="11" fill="#000">?</text>
 </svg>
 <div class="btn dis" style="left:836px;top:661px;width:85px">Save to ECU</div>
 <div class="btn dis" style="left:927px;top:661px;width:85px">Reset</div>
 <div id="status"><div id="prog"></div><div id="led"></div></div>
</div>
</body>
</html>
